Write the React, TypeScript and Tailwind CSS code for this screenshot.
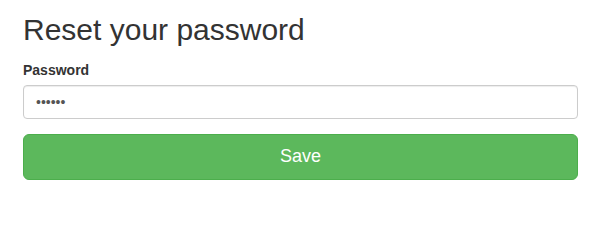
import React, { useState } from 'react';

const App: React.FC = () => {
  const [password, setPassword] = useState('secret');

  return (
    <div className="min-h-[245px] bg-white pl-[23px] pr-[27px] pt-[13px] font-['Liberation_Sans',Arial,sans-serif] text-[#333]">
      <h2 className="mb-[14px] text-[30px] font-normal leading-[33px]">Reset your password</h2>
      <form onSubmit={(e) => e.preventDefault()}>
        <label htmlFor="password" className="mb-[5px] block text-[14px] font-bold leading-[20px]">
          Password
        </label>
        <input
          id="password"
          type="password"
          value={password}
          onChange={(e) => setPassword(e.target.value)}
          className="block h-[34px] w-full rounded-[4px] border border-[#ccc] bg-white px-[12px] text-[14px] text-[#555] shadow-[inset_0_1px_1px_rgba(0,0,0,0.075)] outline-none"
        />
        <button
          type="submit"
          className="mt-[15px] block h-[46px] w-full rounded-[6px] border border-[#4cae4c] bg-[#5cb85c] text-[18px] leading-[1.33] text-white"
        >
          Save
        </button>
      </form>
    </div>
  );
};

export default App;
